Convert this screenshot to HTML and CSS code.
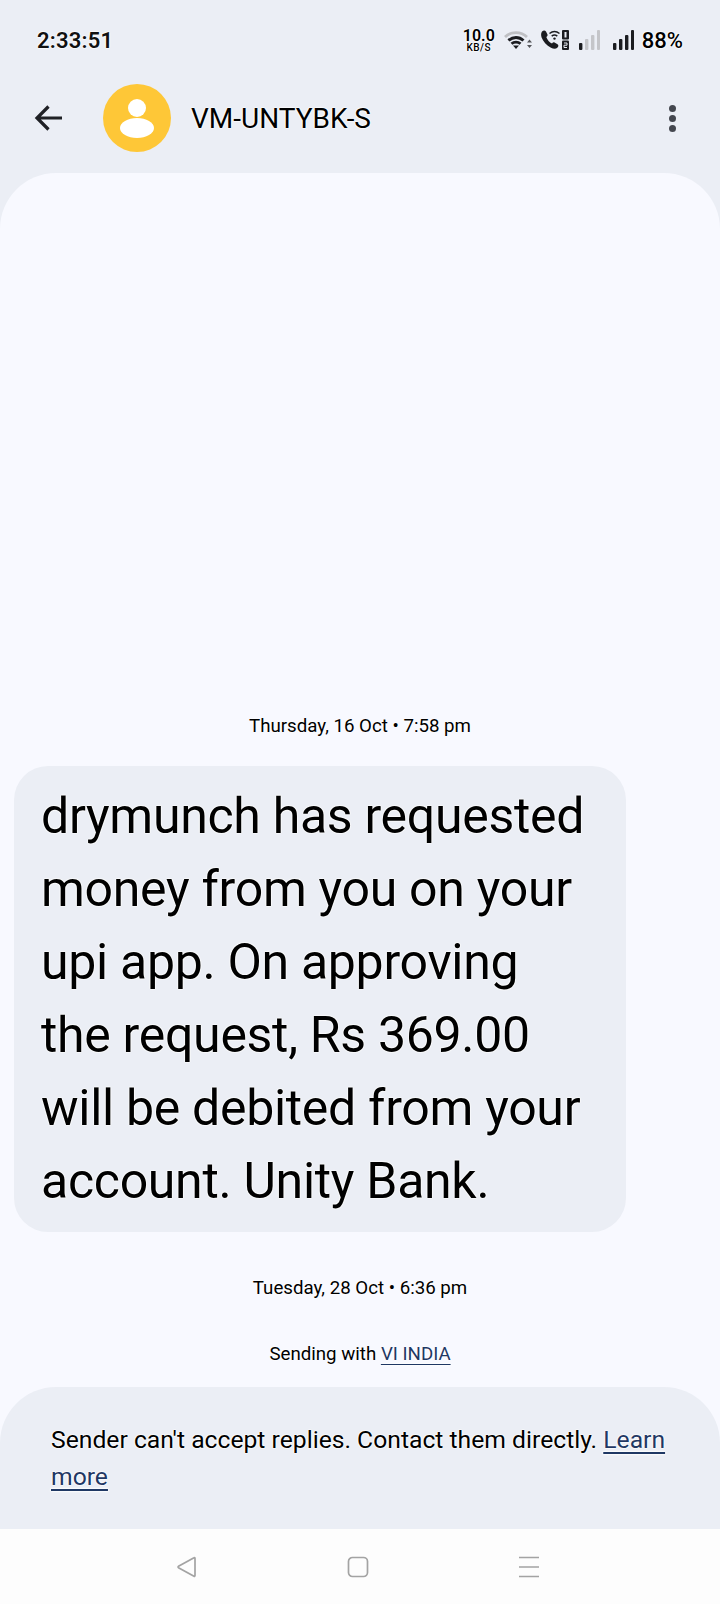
FILE: index.html
```html
<!DOCTYPE html>
<html lang="en">
<head>
    <meta charset="UTF-8">
    <meta name="viewport" content="width=device-width, initial-scale=1.0">
    <title>VM-UNTYBK-S</title>
    <link rel="stylesheet" href="styles.css">
</head>
<body>
    <div class="status-bar">
        <span class="clock">2:33:51</span>
        <div class="status-icons">
            <span class="speed"><b>10.0</b><i>KB/S</i></span>
            <svg class="wifi" width="28" height="20" viewBox="0 0 28 20">
                <path d="M1 7C7 1.200 17 1.200 23 7" fill="none" stroke="#bfc0c4" stroke-width="2.800"/>
                <path d="M4.500 10.500C9 6.500 15 6.500 19.500 10.500" fill="none" stroke="#1b1c20" stroke-width="3"/>
                <path d="M7.500 13.800C10 11.500 14 11.500 16.500 13.800" fill="none" stroke="#1b1c20" stroke-width="2.800"/>
                <path d="M9 15.500H15L12 19Z" fill="#1b1c20"/>
                <path d="M23 12.500L25.500 9.500L28 12.500ZM23 15L25.500 18L28 15Z" fill="#55565a"/>
            </svg>
            <svg class="volte" width="29" height="20" viewBox="0 0 29 20">
                <path d="M2 1.500C3.500 0 5 0 6 1.500L7.500 4.500C7.800 5.500 7.400 6.200 6.300 7C7.300 10 9.400 12.300 12 13.500C12.800 12.500 13.600 12 14.500 12.500L17.500 14.300C18.800 15.100 18.600 16.700 17.300 17.800C15.800 19.100 13.600 19.100 11 17.800C6.500 15.500 3 11.500 1.500 7.300C0.900 5 1 2.800 2 1.500Z" fill="#1b1c20"/>
                <path d="M9.500 3.500C12.500 1 16.500 1 19.500 3.500M11.700 6.200C13.500 4.700 15.500 4.700 17.300 6.200" fill="none" stroke="#1b1c20" stroke-width="1.500"/>
                <circle cx="14.500" cy="8.600" r="1.200" fill="#1b1c20"/>
                <rect x="22" y="0" width="7" height="9.500" rx="1" fill="#1b1c20"/>
                <rect x="24.500" y="2" width="2" height="5.500" fill="#e9ecf3"/>
                <rect x="22" y="10.500" width="7" height="9.500" rx="1" fill="#1b1c20"/>
                <path d="M24 13H27V15.200H24V17.500H27" fill="none" stroke="#e9ecf3" stroke-width="1"/>
            </svg>
            <svg class="bars bars-weak" width="21" height="20" viewBox="0 0 21 20">
                <rect x="0" y="13" width="3.400" height="7" rx="1" fill="#1b1c20"/>
                <rect x="6" y="9" width="3.400" height="11" rx="1" fill="#c4c5c9"/>
                <rect x="12" y="5" width="3.400" height="15" rx="1" fill="#c4c5c9"/>
                <rect x="18" y="0" width="3" height="20" rx="1" fill="#c4c5c9"/>
            </svg>
            <svg class="bars" width="21" height="20" viewBox="0 0 21 20">
                <rect x="0" y="13" width="3.400" height="7" rx="1" fill="#1b1c20"/>
                <rect x="6" y="9" width="3.400" height="11" rx="1" fill="#1b1c20"/>
                <rect x="12" y="5" width="3.400" height="15" rx="1" fill="#1b1c20"/>
                <rect x="18" y="0" width="3" height="20" rx="1" fill="#1b1c20"/>
            </svg>
            <span class="battery">88%</span>
        </div>
    </div>

    <div class="app-bar">
        <svg class="back" width="30" height="28" viewBox="0 0 30 28">
            <path d="M28 14H3M14.500 2.500L3 14L14.500 25.500" fill="none" stroke="#1f2025" stroke-width="3.200"/>
        </svg>
        <div class="avatar">
            <svg width="68" height="68" viewBox="0 0 68 68">
                <circle cx="34" cy="24" r="9" fill="#fff"/>
                <ellipse cx="34" cy="44" rx="17" ry="10" fill="#fff"/>
            </svg>
        </div>
        <span class="sender">VM-UNTYBK-S</span>
        <div class="more"><i></i><i></i><i></i></div>
    </div>

    <div class="thread">
        <div class="stamp">Thursday, 16 Oct • 7:58 pm</div>
        <div class="bubble">drymunch has requested money from you on your upi app. On approving the request, Rs 369.00 will be debited from your account. Unity Bank.</div>
        <div class="stamp stamp-second">Tuesday, 28 Oct • 6:36 pm</div>
        <div class="stamp stamp-sim">Sending with <a href="#">VI INDIA</a></div>
    </div>

    <div class="no-reply">
        <p>Sender can't accept replies. Contact them directly. <a href="#">Learn</a> <a href="#">more</a></p>
    </div>

    <div class="nav-bar">
        <svg width="24" height="24" viewBox="0 0 24 24">
            <path d="M20 3.500V20.500C20 21.200 19.500 21.500 19 21.200L3.500 12.800C2.900 12.400 2.900 11.700 3.500 11.300L19 2.800C19.500 2.500 20 2.800 20 3.500Z" fill="none" stroke="#a3a3a3" stroke-width="1.700"/>
        </svg>
        <svg width="24" height="24" viewBox="0 0 24 24">
            <rect x="2.500" y="2.500" width="19" height="19" rx="4" fill="none" stroke="#a3a3a3" stroke-width="1.700"/>
        </svg>
        <svg width="24" height="24" viewBox="0 0 24 24">
            <path d="M2 2.500H22M2 12H22M2 21.500H22" fill="none" stroke="#a3a3a3" stroke-width="1.700"/>
        </svg>
    </div>
</body>
</html>
```

FILE: styles.css
```css
* {
    box-sizing: border-box;
}
body {
    margin: 0;
    width: 720px;
    height: 1604px;
    display: flex;
    flex-direction: column;
    overflow: hidden;
    background-color: #ebeef5;
    font-family: Roboto, "Noto Sans", sans-serif;
    color: #000;
    text-shadow: 0 0 2px #fff, 0 0 2px #fff, 0 0 2px #fff, 0 0 1px #fff;
}
a {
    color: #1f3864;
    text-decoration: underline;
    text-underline-offset: 4px;
}
.status-bar {
    height: 80px;
    flex: none;
    display: flex;
    justify-content: space-between;
    align-items: center;
    padding: 0 37px;
}
.clock {
    font-size: 22px;
    font-weight: 600;
    letter-spacing: 0.2px;
    color: #111;
}
.status-icons {
    display: flex;
    align-items: center;
}
.speed {
    display: flex;
    flex-direction: column;
    align-items: center;
    line-height: 1;
    width: 30px;
}
.speed b {
    font-size: 16px;
    font-weight: 600;
}
.speed i {
    font-size: 10px;
    font-style: normal;
    font-weight: 500;
    letter-spacing: 0.5px;
    margin-top: -1px;
}
.wifi {
    margin-left: 10px;
}
.volte {
    margin-left: 8px;
}
.bars {
    margin-left: 10px;
}
.bars-weak + .bars {
    margin-left: 13px;
}
.battery {
    font-size: 22px;
    font-weight: 500;
    margin-left: 8px;
}
.app-bar {
    height: 93px;
    flex: none;
    display: flex;
    align-items: center;
    padding: 0 44px 17px 34px;
}
.back {
    flex: none;
}
.avatar {
    width: 68px;
    height: 68px;
    flex: none;
    margin-left: 39px;
    border-radius: 50%;
    background-color: #fec737;
}
.avatar svg {
    display: block;
}
.sender {
    margin-left: 20px;
    font-size: 28px;
    flex: 1;
}
.more {
    display: flex;
    flex-direction: column;
    gap: 3px;
}
.more i {
    width: 7px;
    height: 7px;
    border-radius: 50%;
    background-color: #44474f;
}
.thread {
    flex: 1;
    display: flex;
    flex-direction: column;
    justify-content: flex-end;
    background-color: #f8f9ff;
    border-radius: 56px 56px 0 0;
}
.stamp {
    text-align: center;
    font-size: 18.7px;
}
.bubble {
    width: 612px;
    margin: 29px 0 0 14px;
    padding: 14px 35px 14px 27px;
    background-color: #ebeef5;
    border-radius: 34px;
    font-size: 50px;
    letter-spacing: -0.3px;
    line-height: 73px;
}
.stamp-second {
    margin-top: 45px;
}
.stamp-sim {
    margin-top: 44px;
    padding-bottom: 22px;
}
.no-reply {
    height: 142px;
    flex: none;
    background-color: #f8f9ff;
}
.no-reply p {
    margin: 0;
    height: 100%;
    padding: 34px 40px 0 51px;
    background-color: #ebeef5;
    border-radius: 56px 56px 0 0;
    font-size: 24.7px;
    line-height: 37px;
}
.nav-bar {
    height: 75px;
    flex: none;
    display: flex;
    justify-content: center;
    align-items: center;
    gap: 147px;
    background-color: #fdfdfd;
    padding-right: 4px;
}
```
